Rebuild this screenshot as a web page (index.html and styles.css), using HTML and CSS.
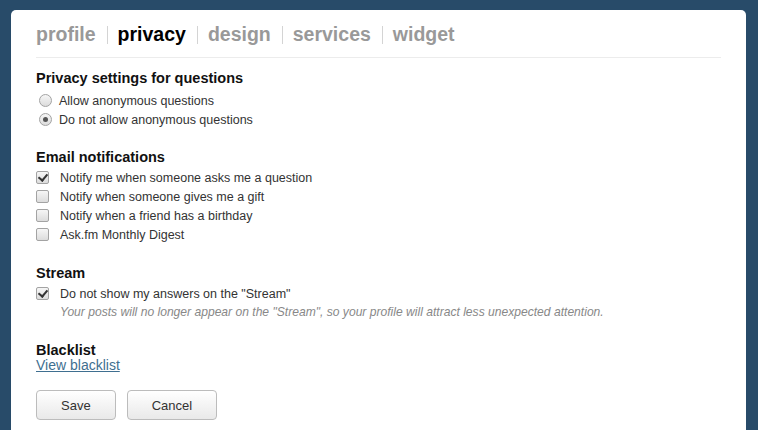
FILE: index.html
```html
<!DOCTYPE html>
<html>
<head>
<meta charset="utf-8">
<link rel="stylesheet" href="styles.css">
</head>
<body>
<div class="panel">
  <nav class="tabs">
    <span class="tab">profile</span><span class="sep"></span>
    <span class="tab active">privacy</span><span class="sep"></span>
    <span class="tab">design</span><span class="sep"></span>
    <span class="tab">services</span><span class="sep"></span>
    <span class="tab">widget</span>
  </nav>

  <section class="group">
    <h3 class="head">Privacy settings for questions</h3>
    <div class="options radios">
      <div class="row"><span class="radio"></span>Allow anonymous questions</div>
      <div class="row"><span class="radio on"></span>Do not allow anonymous questions</div>
    </div>
  </section>

  <section class="group">
    <h3 class="head">Email notifications</h3>
    <div class="options">
      <div class="row"><span class="check on"></span>Notify me when someone asks me a question</div>
      <div class="row"><span class="check"></span>Notify when someone gives me a gift</div>
      <div class="row"><span class="check"></span>Notify when a friend has a birthday</div>
      <div class="row"><span class="check"></span>Ask.fm Monthly Digest</div>
    </div>
  </section>

  <section class="group">
    <h3 class="head">Stream</h3>
    <div class="options">
      <div class="row"><span class="check on"></span>Do not show my answers on the "Stream"</div>
      <div class="desc">Your posts will no longer appear on the "Stream", so your profile will attract less unexpected attention.</div>
    </div>
  </section>

  <section class="group last">
    <h3 class="head">Blacklist</h3>
    <a class="link" href="#">View blacklist</a>
  </section>

  <div class="actions">
    <button class="btn">Save</button>
    <button class="btn">Cancel</button>
  </div>
</div>
</body>
</html>
```

FILE: styles.css
```css
html, body {
  margin: 0;
  padding: 0;
  height: 100%;
  overflow: hidden;
}
body {
  background: #284b69;
  font-family: "Liberation Sans", Arial, sans-serif;
  padding: 10px 12px 0 11px;
  box-sizing: border-box;
}
.panel {
  background: #fff;
  border-radius: 5px 5px 0 0;
  padding: 0 25px;
  height: 500px;
}
.tabs {
  display: flex;
  align-items: center;
  padding: 12px 0 11px;
  height: 24px;
  border-bottom: 1px solid #ececec;
}
.tab {
  font-size: 19.5px;
  font-weight: bold;
  line-height: 24px;
  color: #999;
}
.tab.active {
  color: #000;
}
.sep {
  width: 1px;
  height: 18px;
  background: #d4d4d4;
  margin: 2px 10px 0 11px;
}
.group {
  margin-top: 11px;
}
.group + .group {
  margin-top: 20px;
}
.head {
  margin: 0 0 2px;
  font-size: 14.5px;
  line-height: 18px;
  font-weight: bold;
  color: #111;
}
.options.radios {
  margin: 4px 0 -1px;
}
.row {
  display: flex;
  align-items: center;
  height: 19px;
  font-size: 12.5px;
  color: #333;
}
.desc {
  padding-left: 24px;
  font-size: 12.1px;
  line-height: 18px;
  font-style: italic;
  color: #888;
}
.radio {
  width: 11px;
  height: 11px;
  border: 1px solid #a3a3a3;
  border-radius: 50%;
  background: linear-gradient(#f6f6f6, #dcdcdc);
  margin: 0 7px 0 3px;
  display: flex;
  align-items: center;
  justify-content: center;
}
.radio.on::after {
  content: "";
  width: 5px;
  height: 5px;
  border-radius: 50%;
  background: #555;
}
.check {
  position: relative;
  width: 11px;
  height: 11px;
  border: 1px solid #a3a3a3;
  border-radius: 2px;
  background: linear-gradient(#f6f6f6, #dcdcdc);
  margin: 0 11px 0 0;
}
.check.on::after {
  content: "";
  position: absolute;
  left: 3px;
  top: 0px;
  width: 4px;
  height: 7px;
  border-right: 2px solid #333;
  border-bottom: 2px solid #333;
  transform: rotate(40deg);
}
.group.last .head {
  margin-bottom: 0;
}
.link {
  display: block;
  width: fit-content;
  font-size: 14px;
  line-height: 13px;
  color: #3f6f90;
  text-decoration: underline;
}
.actions {
  display: flex;
  gap: 11px;
  margin-top: 18px;
}
.btn {
  height: 30px;
  padding: 0 24px;
  border: 1px solid #bcbcbc;
  border-radius: 4px;
  background: linear-gradient(#ffffff, #e9e9e9);
  font-family: "Liberation Sans", Arial, sans-serif;
  font-size: 13px;
  color: #333;
}
```
